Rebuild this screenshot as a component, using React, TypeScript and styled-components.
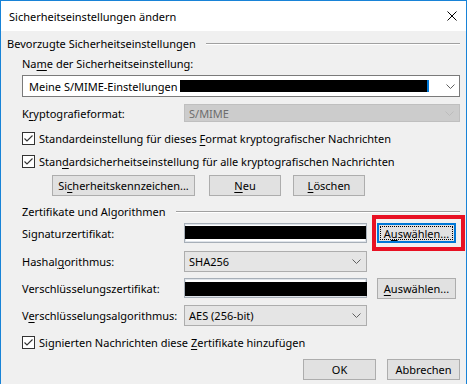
import React from 'react';
import styled, { createGlobalStyle } from 'styled-components';

const GlobalStyle = createGlobalStyle`
  html, body {
    margin: 0;
    padding: 0;
    background: #ffffff;
  }
  body {
    font-family: "Noto Sans", "Open Sans", sans-serif;
    font-size: 11px;
    color: #000;
  }
  u {
    text-decoration-thickness: 1px;
    text-underline-offset: 2px;
  }
`;

const Window = styled.div`
  width: 467px;
  height: 384px;
  box-sizing: border-box;
  border: 1px solid #1883d7;
  border-bottom: none;
  display: flex;
  flex-direction: column;
  background: #f0f0f0;
  overflow: hidden;
`;

const TitleBar = styled.div`
  height: 30px;
  flex: none;
  background: #ffffff;
  display: flex;
  align-items: center;
  justify-content: space-between;
  padding: 0 9px 0 8px;
  font-size: 11px;
`;

const Content = styled.div`
  flex: 1;
  padding: 0 6px;
  display: flex;
  flex-direction: column;
`;

const GroupHeader = styled.div<{ $indent?: number; $top: number }>`
  display: flex;
  height: 14px;
  line-height: 14px;
  margin-top: ${(p) => p.$top}px;
  padding-left: ${(p) => p.$indent ?? 0}px;
  white-space: nowrap;
`;

const GroupLine = styled.div`
  flex: 1;
  height: 1px;
  margin: 6px 0 0 10px;
  background: #a0a0a0;
  border-bottom: 1px solid #ffffff;
`;

const Inner = styled.div`
  padding-left: 15px;
  display: flex;
  flex-direction: column;
`;

const TextLine = styled.div<{ $top: number }>`
  height: 14px;
  line-height: 14px;
  margin-top: ${(p) => p.$top}px;
  white-space: nowrap;
`;

const FieldRow = styled.div<{ $top: number; $h: number }>`
  display: flex;
  align-items: center;
  height: ${(p) => p.$h}px;
  margin-top: ${(p) => p.$top}px;
`;

const Label = styled.span`
  width: 162px;
  flex: none;
  white-space: nowrap;
`;

type ComboKind = 'edit' | 'disabled' | 'list';

const Combo = styled.div<{ $kind: ComboKind; $w?: number }>`
  box-sizing: border-box;
  height: 100%;
  ${(p) => (p.$w ? `width: ${p.$w}px; flex: none;` : 'flex: 1;')}
  display: flex;
  align-items: center;
  padding-left: ${(p) => (p.$kind === 'edit' ? 6 : 4)}px;
  padding-right: ${(p) => (p.$kind === 'edit' ? 4 : 5)}px;
  white-space: nowrap;
  border: 1px solid
    ${(p) => (p.$kind === 'edit' ? '#7a7a7a' : p.$kind === 'disabled' ? '#bfbfbf' : '#adadad')};
  background: ${(p) => (p.$kind === 'edit' ? '#ffffff' : p.$kind === 'disabled' ? '#cccccc' : '#e5e5e5')};
  color: ${(p) => (p.$kind === 'disabled' ? '#6d6d6d' : '#000')};

  svg {
    margin-left: auto;
    flex: none;
  }
`;

const Redaction = styled.span<{ $w: number; $h: number }>`
  display: inline-block;
  width: ${(p) => p.$w}px;
  height: ${(p) => p.$h}px;
  background: #000;
  flex: none;
`;

const SelTail = styled.span`
  display: inline-block;
  width: 2px;
  height: 12px;
  background: #0078d7;
  flex: none;
`;

const CertField = styled.div<{ $pad: number }>`
  box-sizing: border-box;
  width: 183px;
  height: 100%;
  flex: none;
  background: #ffffff;
  border: 1px solid #a7afb8;
  box-shadow: inset 0 0 0 1px #dfe4ea;
  padding-top: ${(p) => p.$pad}px;
  display: flex;
  align-items: flex-start;
`;

const Button = styled.button<{ $w: number; $focused?: boolean }>`
  position: relative;
  box-sizing: border-box;
  width: ${(p) => p.$w}px;
  height: ${(p) => (p.$focused ? 20 : 21)}px;
  flex: none;
  padding: 0;
  margin: 0;
  font: inherit;
  color: #000;
  background: #e1e1e1;
  border: ${(p) => (p.$focused ? '2px solid #0078d7' : '1px solid #adadad')};
  white-space: nowrap;

  ${(p) =>
    p.$focused &&
    `&::after {
      content: '';
      position: absolute;
      inset: 1px;
      border: 1px dotted #000;
    }`}
`;

const Highlight = styled.span`
  position: relative;
  display: inline-flex;
  margin-left: 10px;
  height: 100%;

  &::before {
    content: '';
    position: absolute;
    left: -5px;
    top: -8px;
    right: -9px;
    bottom: -8px;
    border: 4px solid #e81123;
    pointer-events: none;
  }
`;

const SideButton = styled.span`
  display: inline-flex;
  margin-left: 10px;
  height: 100%;
  align-items: flex-start;
`;

const CheckRow = styled.label<{ $top: number }>`
  display: flex;
  align-items: center;
  gap: 4px;
  height: 13px;
  margin-top: ${(p) => p.$top}px;
  white-space: nowrap;

  svg {
    flex: none;
  }
`;

const ButtonRow = styled.div<{ $top: number }>`
  display: flex;
  height: 21px;
  margin: ${(p) => p.$top}px 0 0 30px;
  gap: 14px;

  & > button:last-child {
    margin-left: -2px;
  }
`;

const Footer = styled.div`
  display: flex;
  justify-content: flex-end;
  gap: 11px;
  margin-top: 10px;
`;

const Chevron = ({ color = '#606060' }: { color?: string }) => (
  <svg width="9" height="5" viewBox="0 0 9 5">
    <polyline points="0.5,0.5 4.5,4.5 8.5,0.5" fill="none" stroke={color} strokeWidth="1" />
  </svg>
);

const CheckBox = () => (
  <svg width="13" height="13" viewBox="0 0 13 13">
    <rect x="0.5" y="0.5" width="12" height="12" fill="#fff" stroke="#333" />
    <polyline points="2.5,6.5 5,9 10.5,3.5" fill="none" stroke="#333" strokeWidth="1.1" />
  </svg>
);

const CloseIcon = () => (
  <svg width="10" height="10" viewBox="0 0 10 10">
    <path d="M0.5 0.5 L9.5 9.5 M9.5 0.5 L0.5 9.5" stroke="#000" strokeWidth="1" />
  </svg>
);

export default function App() {
  return (
    <>
      <GlobalStyle />
      <Window>
        <TitleBar>
          <span>Sicherheitseinstellungen ändern</span>
          <CloseIcon />
        </TitleBar>
        <Content>
          <GroupHeader $top={6}>
            Bevorzugte Sicherheitseinstellungen
            <GroupLine />
          </GroupHeader>
          <Inner>
            <TextLine $top={6}>
              Na<u>m</u>e der Sicherheitseinstellung:
            </TextLine>
            <FieldRow $top={4} $h={22}>
              <Combo $kind="edit">
                Meine S/MIME-Einstellungen&nbsp;
                <Redaction $w={247} $h={12} />
                <SelTail />
                <Chevron />
              </Combo>
            </FieldRow>
            <FieldRow $top={7} $h={18}>
              <Label>
                K<u>r</u>yptografieformat:
              </Label>
              <Combo $kind="disabled">
                S/MIME
                <Chevron color="#bcbcbc" />
              </Combo>
            </FieldRow>
            <CheckRow $top={10}>
              <CheckBox />
              <span>
                Standardeinstellung für dieses <u>F</u>ormat kryptografischer Nachrichten
              </span>
            </CheckRow>
            <CheckRow $top={10}>
              <CheckBox />
              <span>
                Stan<u>d</u>ardsicherheitseinstellung für alle kryptografischen Nachrichten
              </span>
            </CheckRow>
            <ButtonRow $top={7}>
              <Button $w={143}>
                Si<u>c</u>herheitskennzeichen...
              </Button>
              <Button $w={72}>
                <u>N</u>eu
              </Button>
              <Button $w={72}>
                <u>L</u>öschen
              </Button>
            </ButtonRow>
          </Inner>
          <GroupHeader $top={9} $indent={15}>
            Zertifikate und Algorithmen
            <GroupLine />
          </GroupHeader>
          <Inner>
            <FieldRow $top={4} $h={20}>
              <Label>Signaturzertifikat:</Label>
              <CertField $pad={2}>
                <Redaction $w={181} $h={13} />
              </CertField>
              <Highlight>
                <Button $w={79} $focused>
                  A<u>u</u>swählen...
                </Button>
              </Highlight>
            </FieldRow>
            <FieldRow $top={8} $h={21}>
              <Label>
                Hashal<u>g</u>orithmus:
              </Label>
              <Combo $kind="list" $w={183}>
                SHA256
                <Chevron />
              </Combo>
            </FieldRow>
            <FieldRow $top={6} $h={20}>
              <Label>Verschlüsselungszertifikat:</Label>
              <CertField $pad={3}>
                <Redaction $w={182} $h={14} />
              </CertField>
              <SideButton>
                <Button $w={79}>
                  <u>A</u>uswählen...
                </Button>
              </SideButton>
            </FieldRow>
            <FieldRow $top={7} $h={21}>
              <Label>
                V<u>e</u>rschlüsselungsalgorithmus:
              </Label>
              <Combo $kind="list" $w={183}>
                AES (256-bit)
                <Chevron />
              </Combo>
            </FieldRow>
            <CheckRow $top={10}>
              <CheckBox />
              <span>
                Signierten Nachrichten diese <u>Z</u>ertifikate hinzufügen
              </span>
            </CheckRow>
          </Inner>
          <Footer>
            <Button $w={73}>OK</Button>
            <Button $w={73}>Abbrechen</Button>
          </Footer>
        </Content>
      </Window>
    </>
  );
}
